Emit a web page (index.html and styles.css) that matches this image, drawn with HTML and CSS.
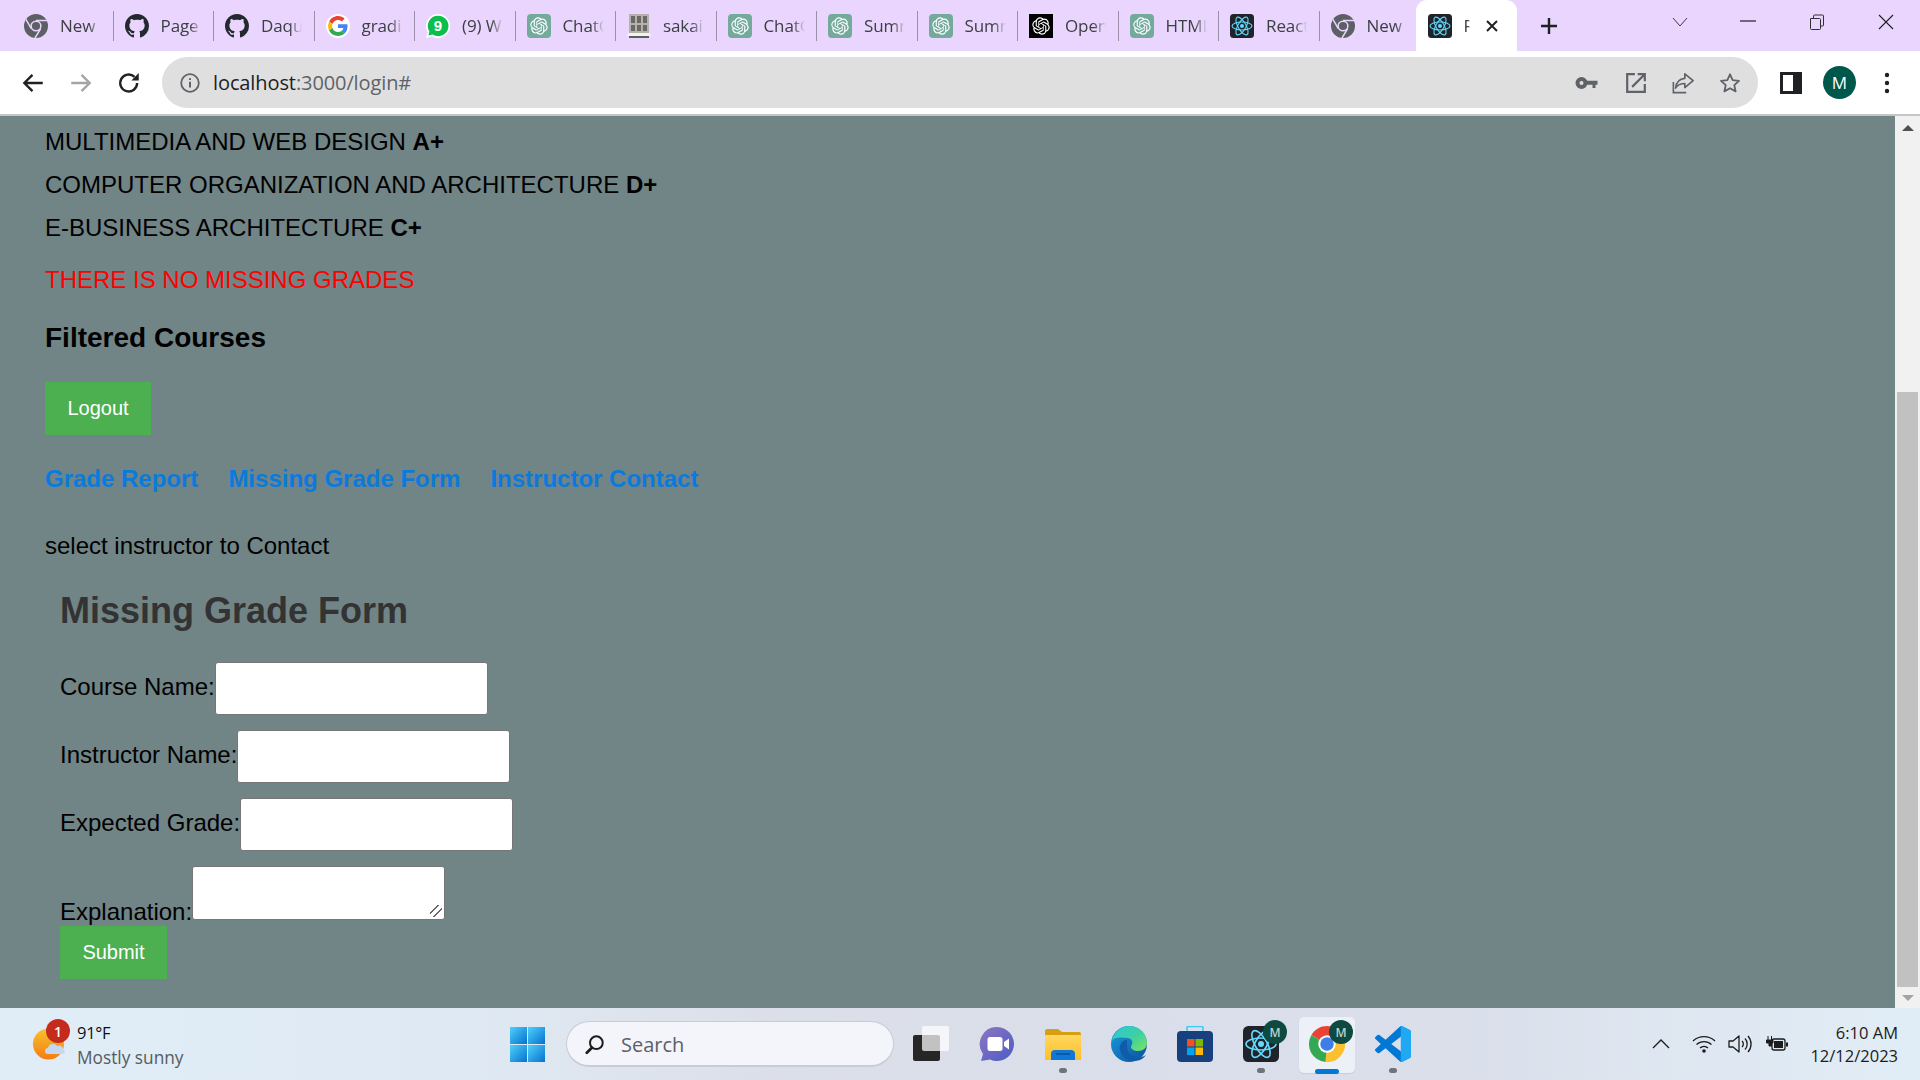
FILE: index.html
```html
<!DOCTYPE html>
<html lang="en">
<head>
<meta charset="utf-8">
<title>React App</title>
<link rel="stylesheet" href="styles.css">
</head>
<body>
<svg class="defs" width="0" height="0" aria-hidden="true">
  <defs>
    <symbol id="i-chrome" viewBox="0 0 24 24">
      <circle cx="12" cy="12" r="12" fill="#5c5f64"/>
      <path d="M12 6.6H23M7.3 14.7L1.8 5.2M16.7 14.7L11 24" stroke="#e9d5fd" stroke-width="1.5" fill="none"/>
      <circle cx="12" cy="12" r="5.6" fill="#e9d5fd"/>
      <circle cx="12" cy="12" r="4.1" fill="#5c5f64"/>
    </symbol>
    <symbol id="i-github" viewBox="0 0 16 16">
      <path fill="#24292f" d="M8 0C3.58 0 0 3.58 0 8c0 3.54 2.29 6.53 5.47 7.59.4.07.55-.17.55-.38 0-.19-.01-.82-.01-1.49-2.01.37-2.53-.49-2.69-.94-.09-.23-.48-.94-.82-1.13-.28-.15-.68-.52-.01-.53.63-.01 1.08.58 1.23.82.72 1.21 1.87.87 2.33.66.07-.52.28-.87.51-1.07-1.78-.2-3.64-.89-3.64-3.95 0-.87.31-1.59.82-2.15-.08-.2-.36-1.02.08-2.12 0 0 .67-.21 2.2.82.64-.18 1.32-.27 2-.27.68 0 1.36.09 2 .27 1.53-1.04 2.2-.82 2.2-.82.44 1.1.16 1.92.08 2.12.51.56.82 1.27.82 2.15 0 3.07-1.87 3.75-3.65 3.95.29.25.54.73.54 1.48 0 1.07-.01 1.93-.01 2.2 0 .21.15.46.55.38A8.013 8.013 0 0016 8c0-4.42-3.58-8-8-8z"/>
    </symbol>
    <symbol id="i-google" viewBox="-5 -5 58 58">
      <circle cx="24" cy="24" r="29" fill="#fff"/>
      <path fill="#EA4335" d="M24 9.5c3.54 0 6.71 1.22 9.21 3.6l6.85-6.85C35.9 2.38 30.47 0 24 0 14.62 0 6.51 5.38 2.56 13.22l7.98 6.19C12.43 13.72 17.74 9.5 24 9.5z"/>
      <path fill="#4285F4" d="M46.98 24.55c0-1.57-.15-3.09-.38-4.55H24v9.02h12.94c-.58 2.96-2.26 5.48-4.78 7.18l7.73 6c4.51-4.18 7.09-10.36 7.09-17.65z"/>
      <path fill="#FBBC05" d="M10.53 28.59c-.48-1.45-.76-2.99-.76-4.59s.27-3.14.76-4.59l-7.98-6.19C.92 16.46 0 20.12 0 24c0 3.88.92 7.54 2.56 10.78l7.97-6.19z"/>
      <path fill="#34A853" d="M24 48c6.48 0 11.93-2.13 16.04-5.81l-7.73-6c-2.15 1.45-4.92 2.3-8.31 2.3-6.26 0-11.57-4.22-13.47-9.91l-7.98 6.19C6.51 42.62 14.62 48 24 48z"/>
    </symbol>
    <symbol id="i-whatsapp" viewBox="0 0 24 24">
      <path fill="#fff" d="M12 0a12 12 0 0 0-10.2 18.3L0 24l6-1.7A12 12 0 1 0 12 0z"/>
      <path fill="#0bbf4d" d="M12 1.8a10.2 10.2 0 0 0-8.6 15.7l-1 4 4.1-1.1A10.2 10.2 0 1 0 12 1.8z"/>
      <text x="12" y="17.3" font-family="Liberation Sans, sans-serif" font-size="15" font-weight="700" fill="#fff" text-anchor="middle">9</text>
    </symbol>
    <symbol id="i-knot" viewBox="-4.5 -4.5 33 33">
      <path fill="#fff" d="M22.2819 9.8211a5.9847 5.9847 0 0 0-.5157-4.9108 6.0462 6.0462 0 0 0-6.5098-2.9A6.0651 6.0651 0 0 0 4.9807 4.1818a5.9847 5.9847 0 0 0-3.9977 2.9 6.0462 6.0462 0 0 0 .7427 7.0966 5.98 5.98 0 0 0 .511 4.9107 6.051 6.051 0 0 0 6.5146 2.9001A5.9847 5.9847 0 0 0 13.2599 24a6.0557 6.0557 0 0 0 5.7718-4.2058 5.9894 5.9894 0 0 0 3.9977-2.9001 6.0557 6.0557 0 0 0-.7475-7.0729zm-9.022 12.6081a4.4755 4.4755 0 0 1-2.8764-1.0408l.1419-.0804 4.7783-2.7582a.7948.7948 0 0 0 .3927-.6813v-6.7369l2.02 1.1686a.071.071 0 0 1 .038.052v5.5826a4.504 4.504 0 0 1-4.4945 4.4944zm-9.6607-4.1254a4.4708 4.4708 0 0 1-.5346-3.0137l.142.0852 4.783 2.7582a.7712.7712 0 0 0 .7806 0l5.8428-3.3685v2.3324a.0804.0804 0 0 1-.0332.0615L9.74 19.9502a4.4992 4.4992 0 0 1-6.1408-1.6464zM2.3408 7.8956a4.485 4.485 0 0 1 2.3655-1.9728V11.6a.7664.7664 0 0 0 .3879.6765l5.8144 3.3543-2.0201 1.1685a.0757.0757 0 0 1-.071 0l-4.8303-2.7865A4.504 4.504 0 0 1 2.3408 7.872zm16.5963 3.8558L13.1038 8.364 15.1192 7.2a.0757.0757 0 0 1 .071 0l4.8303 2.7913a4.4944 4.4944 0 0 1-.6765 8.1042v-5.6772a.79.79 0 0 0-.407-.667zm2.0107-3.0231l-.142-.0852-4.7735-2.7818a.7759.7759 0 0 0-.7854 0L9.409 9.2297V6.8974a.0662.0662 0 0 1 .0284-.0615l4.8303-2.7866a4.4992 4.4992 0 0 1 6.6802 4.66zM8.3065 12.863l-2.02-1.1638a.0804.0804 0 0 1-.038-.0567V6.0742a4.4992 4.4992 0 0 1 7.3757-3.4537l-.142.0805L8.704 5.459a.7948.7948 0 0 0-.3927.6813zm1.0976-2.3654l2.602-1.4998 2.6069 1.4998v2.9994l-2.5974 1.4997-2.6067-1.4997Z"/>
    </symbol>
    <symbol id="i-gpt" viewBox="0 0 24 24">
      <rect width="24" height="24" rx="4" fill="#74aa9c"/>
      <use href="#i-knot" width="24" height="24"/>
    </symbol>
    <symbol id="i-openai" viewBox="0 0 24 24">
      <rect width="24" height="24" fill="#000"/>
      <use href="#i-knot" width="24" height="24"/>
    </symbol>
    <symbol id="i-sakai" viewBox="0 0 24 24">
      <rect x="2" y="0" width="20" height="20" fill="#b5b2ac"/>
      <g fill="#6b6965">
        <path d="M4 2h4v7H4zM10 2h4v7h-4zM16 2h4v7h-4zM4 11h4v6H4zM10 11h4v6h-4zM16 11h4v6h-4z"/>
      </g>
      <path d="M1 19h22l1 3H0z" fill="#f4f2ee"/>
      <path d="M2 23h20" stroke="#3b3b3b" stroke-width="1.600"/>
    </symbol>
    <symbol id="i-react" viewBox="0 0 24 24">
      <rect width="24" height="24" rx="3.5" fill="#20232a"/>
      <g fill="none" stroke="#61dafb" stroke-width="1.1">
        <ellipse cx="12" cy="12" rx="10" ry="4"/>
        <ellipse cx="12" cy="12" rx="10" ry="4" transform="rotate(60 12 12)"/>
        <ellipse cx="12" cy="12" rx="10" ry="4" transform="rotate(120 12 12)"/>
      </g>
      <circle cx="12" cy="12" r="2" fill="#61dafb"/>
    </symbol>
    <linearGradient id="g-win" x1="0" y1="0" x2="1" y2="1">
      <stop offset="0" stop-color="#4fd0fb"/><stop offset="1" stop-color="#0572cf"/>
    </linearGradient>
    <linearGradient id="g-meet" x1="0" y1="0" x2="1" y2="1">
      <stop offset="0" stop-color="#8f75c0"/><stop offset="1" stop-color="#4c5cc6"/>
    </linearGradient>
    <linearGradient id="g-sun" x1="0" y1="0" x2="0" y2="1">
      <stop offset="0" stop-color="#f9c22f"/><stop offset="1" stop-color="#f57c10"/>
    </linearGradient>
    <linearGradient id="g-folder" x1="0" y1="0" x2="0" y2="1">
      <stop offset="0" stop-color="#ffd75e"/><stop offset="1" stop-color="#fcbf2c"/>
    </linearGradient>
    <linearGradient id="g-edge" x1="0" y1="0" x2="1" y2="1">
      <stop offset="0" stop-color="#2fc6d8"/><stop offset=".55" stop-color="#3fd0a0"/><stop offset="1" stop-color="#7ee45e"/>
    </linearGradient>
    <linearGradient id="g-edge2" x1="0" y1="0" x2="1" y2="1">
      <stop offset="0" stop-color="#1b9de2"/><stop offset="1" stop-color="#0b4f9b"/>
    </linearGradient>
    <clipPath id="c-vs"><rect x="17.2" y="0" width="7" height="24"/></clipPath>
  </defs>
</svg>

<header class="tabstrip">
  <div class="tab"><svg class="fav"><use href="#i-chrome"/></svg><span class="tab-label">New</span></div>
  <div class="tab"><svg class="fav"><use href="#i-github"/></svg><span class="tab-label">Page</span></div>
  <div class="tab"><svg class="fav"><use href="#i-github"/></svg><span class="tab-label">Daqu</span></div>
  <div class="tab"><svg class="fav"><use href="#i-google"/></svg><span class="tab-label">gradi</span></div>
  <div class="tab"><svg class="fav"><use href="#i-whatsapp"/></svg><span class="tab-label">(9) W</span></div>
  <div class="tab"><svg class="fav"><use href="#i-gpt"/></svg><span class="tab-label">ChatG</span></div>
  <div class="tab"><svg class="fav"><use href="#i-sakai"/></svg><span class="tab-label">sakai.</span></div>
  <div class="tab"><svg class="fav"><use href="#i-gpt"/></svg><span class="tab-label">ChatG</span></div>
  <div class="tab"><svg class="fav"><use href="#i-gpt"/></svg><span class="tab-label">Summ</span></div>
  <div class="tab"><svg class="fav"><use href="#i-gpt"/></svg><span class="tab-label">Summ</span></div>
  <div class="tab"><svg class="fav"><use href="#i-openai"/></svg><span class="tab-label">Open</span></div>
  <div class="tab"><svg class="fav"><use href="#i-gpt"/></svg><span class="tab-label">HTML</span></div>
  <div class="tab"><svg class="fav"><use href="#i-react"/></svg><span class="tab-label">React</span></div>
  <div class="tab tab-last"><svg class="fav"><use href="#i-chrome"/></svg><span class="tab-label">New</span></div>
  <div class="tab-active">
    <svg class="fav"><use href="#i-react"/></svg><span class="tab-label tab-label-short">R</span>
    <svg class="tab-close" viewBox="0 0 12 12"><path d="M1 1l10 10M11 1L1 11" stroke="#202124" stroke-width="2"/></svg>
  </div>
  <svg class="newtab" viewBox="0 0 18 18"><path d="M9 1v16M1 9h16" stroke="#202124" stroke-width="2.4"/></svg>
  <div class="winctl">
    <svg class="wc wc-chev" viewBox="0 0 16 10"><path d="M1 1l7 8 7-8" fill="none" stroke="#3c3c3c" stroke-width="1"/></svg>
    <svg class="wc wc-min" viewBox="0 0 16 14"><path d="M0 7h16" stroke="#202020" stroke-width="1.2"/></svg>
    <svg class="wc wc-max" viewBox="0 0 16 16"><path d="M1.5 4.5h9a1 1 0 0 1 1 1v9a1 1 0 0 1-1 1h-8a1 1 0 0 1-1-1zM4.5 4V2a1 1 0 0 1 1-1h8a1 1 0 0 1 1 1v9a1 1 0 0 1-1 1h-2" fill="none" stroke="#303030" stroke-width="1"/></svg>
    <svg class="wc wc-close" viewBox="0 0 16 16"><path d="M1 1l14 14M15 1L1 15" stroke="#202020" stroke-width="1.1"/></svg>
  </div>
</header>

<nav class="toolbar">
  <svg class="tb-btn" viewBox="0 0 24 24"><path d="M21 12H4M11.5 4.5L4 12l7.5 7.5" fill="none" stroke="#202124" stroke-width="2.2"/></svg>
  <svg class="tb-btn" viewBox="0 0 24 24"><path d="M3 12h17M12.5 4.5L20 12l-7.5 7.5" fill="none" stroke="#a4a5a7" stroke-width="2.2"/></svg>
  <svg class="tb-btn" viewBox="0 0 24 24"><path d="M19.5 12a7.8 7.8 0 1 1-2.4-5.6" fill="none" stroke="#202124" stroke-width="2.2"/><path d="M21 2.8v6.8h-6.8z" fill="#202124"/></svg>
  <div class="omnibox">
    <svg class="omni-info" viewBox="0 0 20 20"><circle cx="10" cy="10" r="8.8" fill="none" stroke="#5f6368" stroke-width="1.8"/><path d="M10 8.8v5.6M10 5.2v1.9" stroke="#5f6368" stroke-width="2"/></svg>
    <span class="url"><span class="url-host">localhost</span>:3000/login#</span>
    <div class="omni-actions">
      <svg class="omni-key" viewBox="0 0 22 16"><circle cx="6" cy="8" r="4" fill="none" stroke="#5f6368" stroke-width="4"/><path d="M10 5.800h12v4h-2v3.200h-3v-3.200h-7z" fill="#5f6368"/></svg>
      <svg class="omni-icon" viewBox="0 0 20 20"><path d="M9 2H2v16h16v-7" fill="none" stroke="#5f6368" stroke-width="2"/><path d="M6.5 13.5L17.5 2.500M11.500 2h6.500v6.500" fill="none" stroke="#5f6368" stroke-width="2"/></svg>
      <svg class="omni-icon" viewBox="0 0 24 24"><path d="M1.500 11v11.500h14" fill="none" stroke="#5f6368" stroke-width="1.800"/><path d="M14 2l9 7.500-9 7.500v-4.500c-4.500 0-7.500 1-10 5 .6-6 3.800-10 10-10.500z" fill="none" stroke="#5f6368" stroke-width="1.800" stroke-linejoin="round"/></svg>
      <svg class="omni-icon" viewBox="0 0 24 24"><path d="M12 2.500l2.900 6.300 6.900.8-5.100 4.700 1.400 6.800-6.100-3.400-6.100 3.400 1.400-6.800-5.100-4.700 6.900-.8z" fill="none" stroke="#5f6368" stroke-width="2" stroke-linejoin="round"/></svg>
    </div>
  </div>
  <svg class="tb-panel" viewBox="0 0 22 22"><rect x="1.500" y="1.500" width="19" height="19" fill="none" stroke="#202124" stroke-width="3"/><rect x="13" y="2" width="7" height="18" fill="#202124"/></svg>
  <div class="avatar">M</div>
  <svg class="tb-menu" viewBox="0 0 6 24"><circle cx="3" cy="4" r="2.200" fill="#202124"/><circle cx="3" cy="12" r="2.200" fill="#202124"/><circle cx="3" cy="20" r="2.200" fill="#202124"/></svg>
</nav>

<div class="viewport">
  <main class="page">
    <p class="grade">MULTIMEDIA AND WEB DESIGN <b>A+</b></p>
    <p class="grade">COMPUTER ORGANIZATION AND ARCHITECTURE <b>D+</b></p>
    <p class="grade">E-BUSINESS ARCHITECTURE <b>C+</b></p>
    <p class="notice">THERE IS NO MISSING GRADES</p>
    <h3 class="filtered">Filtered Courses</h3>
    <button class="green-btn logout" type="button">Logout</button>
    <div class="links">
      <a href="#">Grade Report</a>
      <a href="#">Missing Grade Form</a>
      <a href="#">Instructor Contact</a>
    </div>
    <p class="select-line">select instructor to Contact</p>
    <form class="grade-form">
      <h2 class="form-title">Missing Grade Form</h2>
      <div class="form-row"><label>Course Name:</label><input type="text"></div>
      <div class="form-row"><label>Instructor Name:</label><input type="text"></div>
      <div class="form-row"><label>Expected Grade:</label><input type="text"></div>
      <div class="form-row form-row-area"><label>Explanation:</label><textarea></textarea></div>
      <button class="green-btn submit" type="button">Submit</button>
    </form>
  </main>
  <aside class="scrollbar">
    <span class="arrow-up"></span>
    <div class="track"><div class="thumb"></div></div>
    <span class="arrow-down"></span>
  </aside>
</div>

<footer class="taskbar">
  <div class="weather">
    <div class="weather-icon">
      <svg class="sun" viewBox="0 0 34 32"><circle cx="15.500" cy="16" r="15.500" fill="url(#g-sun)"/><path d="M15 26a3 3 0 0 1 0-6 5 5 0 0 1 9-2 4 4 0 0 1 6 3 2.600 2.600 0 0 1 0 5z" fill="#c4d8f0"/></svg>
      <span class="weather-badge">1</span>
    </div>
    <div class="weather-text"><span class="temp">91°F</span><span class="sky">Mostly sunny</span></div>
  </div>
  <div class="apps">
    <svg class="start" viewBox="0 0 35 35"><rect width="17" height="17" fill="url(#g-win)"/><rect x="18" width="17" height="17" fill="url(#g-win)"/><rect y="18" width="17" height="17" fill="url(#g-win)"/><rect x="18" y="18" width="17" height="17" fill="url(#g-win)"/></svg>
    <div class="searchbox">
      <svg class="search-icon" viewBox="0 0 22 22"><circle cx="12.500" cy="9" r="7" fill="none" stroke="#1c1c1c" stroke-width="2.200"/><path d="M7.500 14.500L2 20" stroke="#1c1c1c" stroke-width="3" stroke-linecap="round"/></svg>
      <span>Search</span>
    </div>
    <div class="app app-first">
      <svg viewBox="0 0 36 36"><rect x="0" y="9" width="27" height="26" rx="2" fill="#262626"/><rect x="9" y="0" width="27" height="25" rx="2" fill="#fff" fill-opacity=".72"/></svg>
    </div>
    <div class="app">
      <svg viewBox="0 0 36 36"><path d="M18 1a17 17 0 1 1-7 32.500L2 35l2-7A17 17 0 0 1 18 1z" fill="url(#g-meet)"/><rect x="8.500" y="11" width="15" height="14" rx="2.500" fill="#fff"/><path d="M25 16l5-3.500v11l-5-3.500z" fill="#fff"/></svg>
    </div>
    <div class="app">
      <svg viewBox="0 0 36 36"><path d="M0 5a2 2 0 0 1 2-2h11l4 3h17a2 2 0 0 1 2 2v26H0z" fill="#d99f12"/><path d="M0 9h36v24a1 1 0 0 1-1 1H1a1 1 0 0 1-1-1z" fill="url(#g-folder)"/><path d="M6 34v-7a4 4 0 0 1 4-3h16a4 4 0 0 1 4 3v7z" fill="#0f78d4"/><path d="M11 28h14" stroke="#0b4f96" stroke-width="1.500"/></svg>
      <span class="app-dot"></span>
    </div>
    <div class="app">
      <svg viewBox="0 0 36 36"><circle cx="18" cy="18" r="18" fill="url(#g-edge2)"/><path d="M1 15C3 6 10 0 18 0c10 0 18 7 18 17 0 5-4 8-9 8-4 0-7-2-7-4 0-1 .5-2 1-3 1-2 0-5-4-6C10 11 3 11 1 15z" fill="url(#g-edge)"/><path d="M16 14c-5 0-8 5-7 10 1 6 7 11 14 11 6 0 10-3 12-6-6 4-13 2-16-1-3-4-3-8-3-14z" fill="#0f5ca8"/></svg>
    </div>
    <div class="app">
      <svg viewBox="0 0 36 36"><path d="M10 6V2a1.500 1.500 0 0 1 1.500-1.500h13A1.500 1.500 0 0 1 26 2v4" fill="none" stroke="#3ccbf4" stroke-width="1.600"/><rect y="5" width="36" height="31" rx="4" fill="#16407e"/><rect x="10" y="13" width="7.500" height="7.500" fill="#f25022"/><rect x="18.500" y="13" width="7.500" height="7.500" fill="#7fba00"/><rect x="10" y="21.500" width="7.500" height="7.500" fill="#00a4ef"/><rect x="18.500" y="21.500" width="7.500" height="7.500" fill="#ffb900"/></svg>
    </div>
    <div class="app">
      <svg viewBox="0 0 24 24"><use href="#i-react"/></svg>
      <span class="app-badge">M</span>
      <span class="app-dot"></span>
    </div>
    <div class="app app-active">
      <svg viewBox="0 0 24 24"><path d="M12 12L1.610 6A12 12 0 0 1 22.390 6z" fill="#ea4335"/><path d="M12 12L22.390 6A12 12 0 0 1 11 24z" fill="#fbc02d"/><path d="M12 12L11 24A12 12 0 0 1 1.610 6z" fill="#34a853"/><circle cx="12" cy="12" r="5.800" fill="#fff"/><circle cx="12" cy="12" r="4.500" fill="#3f7ee8"/></svg>
      <span class="app-badge">M</span>
      <span class="app-line"></span>
    </div>
    <div class="app">
      <svg viewBox="0 0 24 24"><path fill="#0078d4" d="M23.150 2.587L18.210.21a1.494 1.494 0 0 0-1.705.29l-9.460 8.630-4.120-3.128a.999.999 0 0 0-1.276.057L.327 7.261A1 1 0 0 0 .326 8.740L3.899 12 .326 15.260a1 1 0 0 0 .001 1.479L1.650 17.940a.999.999 0 0 0 1.276.057l4.120-3.128 9.460 8.630a1.492 1.492 0 0 0 1.704.29l4.942-2.377A1.500 1.500 0 0 0 24 20.060V3.939a1.500 1.500 0 0 0-.850-1.352zm-5.146 14.861L10.826 12l7.178-5.448v10.896z"/><path clip-path="url(#c-vs)" fill="#1fa9f2" d="M23.150 2.587L18.210.21a1.494 1.494 0 0 0-1.705.29L16 1v22l.5.500a1.492 1.492 0 0 0 1.704.29l4.942-2.377A1.500 1.500 0 0 0 24 20.060V3.939a1.500 1.500 0 0 0-.850-1.352z"/></svg>
      <span class="app-dot"></span>
    </div>
  </div>
  <div class="tray">
    <svg class="tray-chev" viewBox="0 0 18 10"><path d="M1 9l8-8 8 8" fill="none" stroke="#1c1c1c" stroke-width="1.300"/></svg>
    <svg class="tray-icon" viewBox="0 0 24 18"><path d="M1 6a16 16 0 0 1 22 0M4.500 9.500a11 11 0 0 1 15 0M8 13a6 6 0 0 1 8 0" fill="none" stroke="#1c1c1c" stroke-width="1.300"/><circle cx="12" cy="16" r="1.800" fill="#1c1c1c"/></svg>
    <svg class="tray-icon" viewBox="0 0 24 18"><path d="M1 6h4l6-5v16l-6-5H1z" fill="none" stroke="#1c1c1c" stroke-width="1.300" stroke-linejoin="round"/><path d="M14 6a4 4 0 0 1 0 6M17 3.500a8 8 0 0 1 0 11M20 1a12 12 0 0 1 0 16" fill="none" stroke="#1c1c1c" stroke-width="1.300"/></svg>
    <svg class="tray-icon tray-icon-last" viewBox="0 0 24 18"><path d="M4 1v4M7.500 1v4M2.500 5h6.500v3H7.500v3H5v-3H2.500z" stroke="#1c1c1c" fill="#1c1c1c" stroke-width="1"/><rect x="8" y="4" width="13" height="11" rx="2" fill="none" stroke="#1c1c1c" stroke-width="1.300"/><rect x="10" y="6" width="9" height="7" fill="#1c1c1c"/><rect x="22" y="7.500" width="2" height="4" fill="#1c1c1c"/></svg>
    <div class="clock"><span>6:10 AM</span><span>12/12/2023</span></div>
  </div>
</footer>
</body>
</html>
```

FILE: styles.css
```css
* { box-sizing: border-box; }

html, body { height: 100%; }

body {
  margin: 0;
  display: flex;
  flex-direction: column;
  height: 100vh;
  overflow: hidden;
  font-family: "Liberation Sans", Arial, sans-serif;
  background: #fff;
}

.defs { position: absolute; }

/* Tab strip */
.tabstrip {
  flex: none;
  height: 51px;
  display: flex;
  align-items: stretch;
  padding-left: 13px;
  background: #e9d5fd;
  font-family: "Open Sans", "Noto Sans", sans-serif;
  color: #3c4043;
}

.tab {
  flex: none;
  width: 100.5px;
  padding-left: 11px;
  display: flex;
  align-items: center;
  gap: 12px;
  position: relative;
}

.tab::after {
  content: "";
  position: absolute;
  right: 0;
  top: 11px;
  height: 30px;
  width: 1px;
  background: #9c8fa8;
}

.tab-last::after { display: none; }

.fav {
  flex: none;
  width: 24px;
  height: 24px;
}

.tab-label {
  flex: none;
  width: 41px;
  overflow: hidden;
  white-space: nowrap;
  font-size: 17px;
  letter-spacing: -0.1px;
  -webkit-mask-image: linear-gradient(90deg, #000 70%, transparent 100%);
  mask-image: linear-gradient(90deg, #000 70%, transparent 100%);
}

.tab-active {
  flex: none;
  width: 101px;
  margin-left: -4.5px;
  display: flex;
  align-items: center;
  padding-left: 12px;
  gap: 12px;
  background: #fff;
  border-radius: 11px 11px 0 0;
}

.tab-label-short { width: 6px; }

.tab-close {
  flex: none;
  width: 12px;
  height: 12px;
  margin-left: 4px;
}

.newtab {
  flex: none;
  align-self: center;
  width: 18px;
  height: 18px;
  margin-left: 23px;
}

.winctl {
  flex: 1;
  display: flex;
  align-items: center;
  padding-left: 114px;
}

.wc { flex: none; width: 16px; }
.wc-chev { height: 10px; margin-top: -7px; }
.wc-min { height: 14px; margin-left: 52px; margin-top: -9px; }
.wc-max { height: 16px; margin-left: 53px; margin-top: -7px; }
.wc-close { height: 16px; margin-left: 53px; margin-top: -7px; }

/* Toolbar */
.toolbar {
  flex: none;
  height: 65px;
  display: flex;
  align-items: center;
  padding: 0 0 0 20px;
  background: #fff;
  border-bottom: 2px solid #c5c7c7;
}

.tb-btn {
  flex: none;
  width: 26px;
  height: 26px;
  margin-right: 22px;
}

.omnibox {
  flex: none;
  width: 1596px;
  height: 51px;
  margin-left: -2px;
  display: flex;
  align-items: center;
  padding: 0 17px 0 18px;
  border-radius: 26px;
  background: #dfdfdf;
}

.omni-info { flex: none; width: 20px; height: 20px; }

.url {
  margin-left: 13px;
  font-family: "Open Sans", "Noto Sans", sans-serif;
  font-size: 20px;
  letter-spacing: -0.1px;
  color: #5f6368;
}

.url-host { color: #202124; }

.omni-actions {
  margin-left: auto;
  display: flex;
  align-items: center;
  gap: 25px;
}

.omni-key { flex: none; width: 23px; height: 16px; margin-right: 2px; }
.omni-icon { flex: none; width: 22px; height: 22px; }

.tb-panel {
  flex: none;
  width: 22px;
  height: 22px;
  margin-left: 22px;
}

.avatar {
  flex: none;
  width: 33px;
  height: 33px;
  margin-left: 21px;
  border-radius: 50%;
  background: #00574b;
  color: #fff;
  display: flex;
  align-items: center;
  justify-content: center;
  font-family: "Open Sans", sans-serif;
  font-size: 17px;
}

.tb-menu {
  flex: none;
  width: 6px;
  height: 24px;
  margin-left: 28px;
}

/* Page */
.viewport {
  flex: 1;
  min-height: 0;
  display: flex;
}

.page {
  flex: 1;
  min-width: 0;
  padding: 4px 0 0 45px;
  background: #718486;
  color: #000;
  font-size: 24px;
  overflow: hidden;
}

.grade {
  margin: 0;
  line-height: 43px;
}

.notice {
  margin: 9px 0 0;
  line-height: 43px;
  color: #f00;
}

.filtered {
  margin: 20px 0 27px;
  font-size: 28px;
  line-height: 34px;
}

.green-btn {
  display: block;
  height: 53px;
  padding: 0 22px;
  border: 0;
  background: #4caf50;
  color: #fff;
  font-family: inherit;
  font-size: 20px;
}

.logout { width: 106px; }
.submit { width: 107px; }

.links {
  display: flex;
  gap: 30px;
  margin-top: 22px;
  line-height: 43px;
  font-weight: 700;
}

.links a {
  color: #0a7bdc;
  text-decoration: none;
}

.select-line {
  margin: 24px 0 0;
  line-height: 43px;
}

.grade-form { padding: 23px 0 0 15px; }

.form-title {
  margin: 0 0 30px;
  font-size: 36px;
  line-height: 42px;
  color: #333;
}

.form-row {
  display: flex;
  align-items: baseline;
  margin-bottom: 15px;
}

.form-row input {
  flex: none;
  width: 273px;
  height: 53px;
  padding: 15px;
  border: 1px solid #767676;
  border-radius: 3px;
  background: #fff;
  font-size: 20px;
}

.form-row-area {
  align-items: flex-end;
  margin-bottom: 6px;
}

.form-row-area label { line-height: 27px; margin-bottom: -5px; }

.form-row textarea {
  flex: none;
  width: 253px;
  height: 54px;
  border: 1px solid #767676;
  border-radius: 3px;
  resize: none;
  background: linear-gradient(135deg, transparent 30%, #666 30% 38%, transparent 38% 62%, #666 62% 70%, transparent 70%) no-repeat right 2px bottom 2px / 12px 12px, #fff;
}

/* Scrollbar */
.scrollbar {
  flex: none;
  width: 25px;
  display: flex;
  flex-direction: column;
  align-items: center;
  padding: 9px 0 7px;
  background: #f1f1f1;
}

.arrow-up {
  width: 0;
  height: 0;
  border: 6px solid transparent;
  border-top: 0;
  border-bottom: 6px solid #505050;
}

.arrow-down {
  width: 0;
  height: 0;
  border: 6px solid transparent;
  border-bottom: 0;
  border-top: 6px solid #a3a3a3;
}

.track {
  flex: 1;
  width: 21px;
  padding-top: 260.5px;
  padding-bottom: 8px;
  display: flex;
}

.thumb {
  flex: 1;
  background: #c1c1c1;
}

/* Taskbar */
.taskbar {
  flex: none;
  height: 72px;
  display: flex;
  align-items: center;
  padding-left: 33px;
  background: linear-gradient(90deg, #e0edf7 0%, #dfe9f3 25%, #dcdfe9 40%, #d9deea 60%, #dadfea 75%, #dfe8f2 90%, #e1edf6 100%);
  font-family: "Open Sans", "Noto Sans", sans-serif;
  color: #1c1c1c;
}

.weather {
  flex: none;
  width: 477px;
  display: flex;
  align-items: center;
}

.weather-icon {
  position: relative;
  flex: none;
  width: 44px;
  height: 32px;
}

.sun { width: 34px; height: 32px; display: block; }

.weather-badge {
  position: absolute;
  left: 13px;
  top: -9px;
  width: 24px;
  height: 24px;
  border-radius: 50%;
  background: #c42b1c;
  color: #fff;
  font-size: 14px;
  font-weight: 600;
  display: flex;
  align-items: center;
  justify-content: center;
}

.weather-text {
  display: flex;
  flex-direction: column;
  gap: 2px;
  margin-top: 2px;
  line-height: 23px;
}

.temp { font-size: 16.5px; letter-spacing: -0.3px; color: #111; }
.sky { font-size: 17.3px; color: #555b60; }

.apps {
  flex: none;
  display: flex;
  align-items: center;
}

.start { flex: none; width: 35px; height: 35px; }

.searchbox {
  flex: none;
  width: 328px;
  height: 46px;
  margin-left: 21px;
  display: flex;
  align-items: center;
  padding: 2px 0 0 18px;
  gap: 16px;
  border: 1px solid #c8ccd8;
  border-bottom-width: 2px;
  border-radius: 23px;
  background: #f3f5fa;
  font-size: 20px;
  color: #5c5f66;
}

.search-icon { flex: none; width: 20px; height: 21px; }

.app {
  position: relative;
  flex: none;
  width: 36px;
  height: 36px;
  margin-left: 30px;
}

.app-first { margin-left: 19px; }

.app > svg {
  display: block;
  width: 36px;
  height: 36px;
}

.app-dot {
  position: absolute;
  left: 14px;
  top: 42px;
  width: 8px;
  height: 5px;
  border-radius: 3px;
  background: #6f737b;
}

.app-badge {
  position: absolute;
  left: 20px;
  top: -6px;
  width: 24px;
  height: 24px;
  border-radius: 50%;
  background: #0e4a40;
  color: #b9d2cb;
  font-size: 12px;
  font-weight: 600;
  display: flex;
  align-items: center;
  justify-content: center;
}

.app-active::before {
  content: "";
  position: absolute;
  left: -10px;
  top: -9px;
  width: 56px;
  height: 56px;
  border-radius: 5px;
  background: #eef0f7;
  box-shadow: 0 1px 1px #c9ccd6;
}

.app-active > svg { position: relative; }

.app-line {
  position: absolute;
  left: 6px;
  top: 43px;
  width: 24px;
  height: 5px;
  border-radius: 3px;
  background: #0078d4;
}

.tray {
  flex: none;
  margin-left: auto;
  padding-right: 22px;
  display: flex;
  align-items: center;
}

.tray-chev { flex: none; width: 18px; height: 10px; margin-right: 22px; }
.tray-icon { flex: none; width: 24px; height: 18px; margin-right: 12px; }
.tray-icon-last { margin-right: 22px; }

.clock {
  display: flex;
  flex-direction: column;
  align-items: flex-end;
  font-size: 16.5px;
  line-height: 23px;
  color: #1c1c1c;
}
```
